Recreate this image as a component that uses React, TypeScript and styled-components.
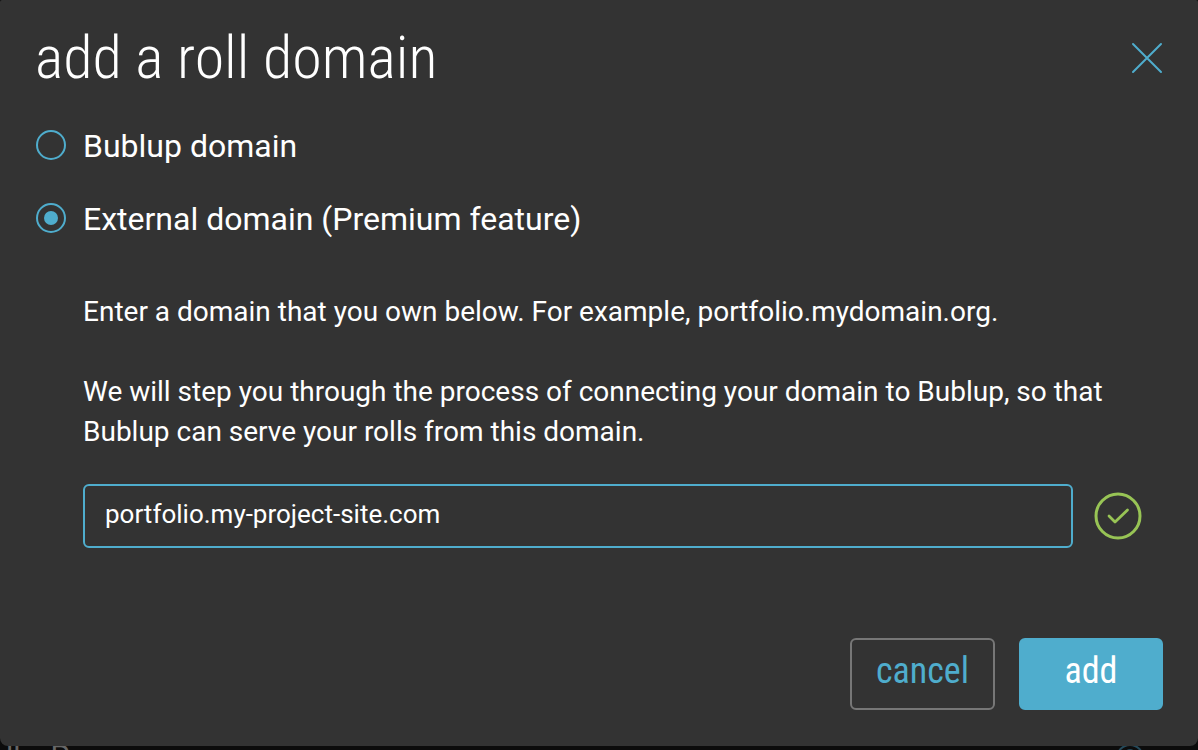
import React, { useState } from "react";
import styled, { createGlobalStyle } from "styled-components";

const GlobalStyle = createGlobalStyle`
  *, *::before, *::after { box-sizing: border-box; }
  html, body, #root { height: 100%; }
  body {
    margin: 0;
    background: #0c0c0c;
    color: #fff;
    font-family: Roboto, sans-serif;
    overflow: hidden;
  }
`;

const condensed = `"Roboto Condensed", Roboto, sans-serif`;
const accent = "#4fadcd";

const Page = styled.div`
  display: flex;
  flex-direction: column;
`;

const Dialog = styled.form`
  position: relative;
  z-index: 1;
  padding: 20px 35px 36px;
  border-radius: 2px 2px 8px 8px;
  background: #333;
`;

const Header = styled.header`
  display: flex;
  align-items: center;
  justify-content: space-between;
  height: 76px;
`;

const Title = styled.h1`
  margin: 0;
  font: 300 60px/76px ${condensed};
`;

const CloseButton = styled.button`
  display: flex;
  padding: 0;
  border: 0;
  background: none;
  color: ${accent};
  cursor: pointer;
`;

const Choices = styled.div`
  display: flex;
  flex-direction: column;
  gap: 33px;
  padding: 30px 1px 0;
`;

const Choice = styled.label`
  display: flex;
  align-items: center;
  gap: 17px;
  font-size: 32px;
  line-height: 40px;
`;

const Radio = styled.input`
  appearance: none;
  display: grid;
  place-items: center;
  width: 30px;
  height: 30px;
  margin: 0 0 2px;
  border: 2px solid ${accent};
  border-radius: 50%;

  &:checked::before {
    content: "";
    width: 14px;
    height: 14px;
    border-radius: 50%;
    background: ${accent};
  }
`;

const Details = styled.div`
  padding: 53px 21px 0 48px;
`;

const Paragraph = styled.p`
  margin: 0 0 40px;
  font-size: 28px;
  line-height: 40px;
`;

const Field = styled.div`
  display: flex;
  align-items: center;
  gap: 21px;
  margin-top: -8px;
`;

const DomainInput = styled.input`
  flex: 1;
  min-width: 0;
  height: 64px;
  padding: 0 20px 4px;
  border: 2px solid ${accent};
  border-radius: 6px;
  outline: 0;
  background: transparent;
  color: #fff;
  font: 400 26px Roboto, sans-serif;
`;

const Actions = styled.footer`
  display: flex;
  justify-content: flex-end;
  gap: 24px;
  padding-top: 90px;
`;

const Button = styled.button<{ $primary?: boolean }>`
  min-width: 144px;
  height: 72px;
  padding: 0 24px 6px;
  border: 2px solid ${(p) => (p.$primary ? accent : "#777")};
  border-radius: 6px;
  background: ${(p) => (p.$primary ? accent : "transparent")};
  color: ${(p) => (p.$primary ? "#fff" : accent)};
  font: 400 36px ${condensed};
  cursor: pointer;
`;

const Backdrop = styled.div`
  display: flex;
  justify-content: space-between;
  align-items: flex-start;
  height: 28px;
  margin-top: -4px;
  padding: 0 54px 0 6px;
  overflow: hidden;
  color: #666;
  font: 400 30px/28px Roboto, sans-serif;
`;

const BackdropText = styled.span`
  display: flex;
  gap: 30px;
`;

export default function App() {
  const [kind, setKind] = useState("external");
  const [domain, setDomain] = useState("portfolio.my-project-site.com");

  return (
    <Page>
      <GlobalStyle />
      <Dialog role="dialog" aria-labelledby="title" onSubmit={(e) => e.preventDefault()}>
        <Header>
          <Title id="title">add a roll domain</Title>
          <CloseButton type="button" aria-label="Close">
            <svg width="32" height="32" viewBox="0 0 32 32" fill="none" stroke="currentColor" strokeWidth="2" strokeLinecap="round">
              <path d="M2 2 30 30M30 2 2 30" />
            </svg>
          </CloseButton>
        </Header>
        <Choices role="radiogroup" aria-labelledby="title">
          <Choice>
            <Radio type="radio" name="kind" checked={kind === "bublup"} onChange={() => setKind("bublup")} />
            Bublup domain
          </Choice>
          <Choice>
            <Radio type="radio" name="kind" checked={kind === "external"} onChange={() => setKind("external")} />
            External domain (Premium feature)
          </Choice>
        </Choices>
        <Details>
          <Paragraph>Enter a domain that you own below. For example, portfolio.mydomain.org.</Paragraph>
          <Paragraph>
            We will step you through the process of connecting your domain to Bublup, so that Bublup can serve your
            rolls from this domain.
          </Paragraph>
          <Field>
            <DomainInput
              type="text"
              aria-label="Domain"
              value={domain}
              onChange={(e) => setDomain(e.target.value)}
            />
            <svg width="48" height="48" viewBox="0 0 48 48" fill="none" stroke="#98c455" strokeLinecap="round" strokeLinejoin="round" aria-label="Valid domain">
              <circle cx="24" cy="24" r="22" strokeWidth="3" />
              <path d="M15 24 21 30 33.5 18" strokeWidth="2.8" />
            </svg>
          </Field>
        </Details>
        <Actions>
          <Button type="button">cancel</Button>
          <Button type="submit" $primary>add</Button>
        </Actions>
      </Dialog>
      <Backdrop aria-hidden="true">
        <BackdropText>
          <span>ll</span>
          <span>P</span>
        </BackdropText>
        <svg width="28" height="28" viewBox="0 0 28 28" fill="none" stroke="#24495a" strokeWidth="2">
          <circle cx="14" cy="16" r="13" />
          <circle cx="14" cy="13" r="5" />
        </svg>
      </Backdrop>
    </Page>
  );
}
